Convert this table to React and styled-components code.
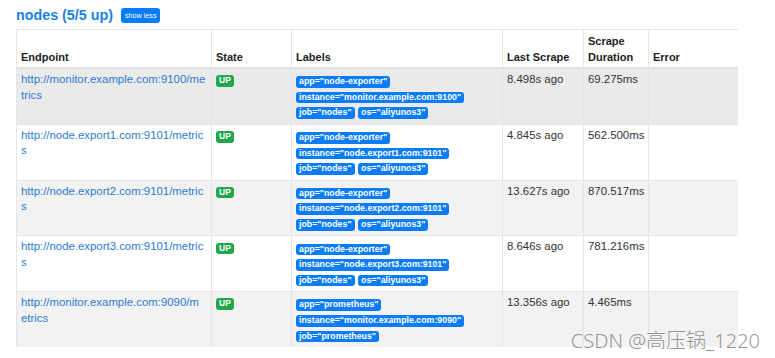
import React from "react";
import styled, { createGlobalStyle } from "styled-components";

const GlobalStyle = createGlobalStyle`
  html, body { margin: 0; padding: 0; background: #fff; }
  body { font-family: "Liberation Sans", Arial, sans-serif; color: #212529; }
`;

const Page = styled.div`
  position: relative;
  width: 775px;
  height: 358px;
  overflow: hidden;
  padding: 5px 0 0 16px;
  box-sizing: border-box;
`;

const TitleRow = styled.div`
  display: flex;
  align-items: center;
  gap: 8px;
  height: 20px;
`;

const Title = styled.h2`
  margin: 0;
  font-size: 14.3px;
  line-height: 20px;
  font-weight: 700;
  color: #1a7fe6;
`;

const SmallButton = styled.button`
  height: 15px;
  padding: 0 4px;
  border: none;
  border-radius: 3px;
  background: #0a7cf5;
  color: #fff;
  font-family: "Liberation Sans", Arial, sans-serif;
  font-size: 7.2px;
  line-height: 15px;
  cursor: pointer;
`;

const Table = styled.table`
  margin-top: 4px;
  width: 721px;
  table-layout: fixed;
  border-collapse: collapse;
  font-size: 11.4px;
`;

const Th = styled.th`
  text-align: left;
  vertical-align: bottom;
  font-size: 11px;
  line-height: 16px;
  font-weight: 700;
  padding: 3px 4px 2px 4px;
  border-top: 1px solid #e3e5e8;
  border-left: 1px solid #e3e5e8;
  border-bottom: 2px solid #e0e3e6;
  color: #222;
`;

const Tr = styled.tr`
  background: ${(p) => p.$bg};
`;

const Td = styled.td`
  vertical-align: top;
  padding: 3px 4px 3px 4px;
  line-height: 15.5px;
  border-left: 1px solid #e3e5e8;
  border-top: 1px solid #e3e5e8;
  color: #333;
`;

const EndpointLink = styled.a`
  color: #2a7bd3;
  text-decoration: none;
  white-space: nowrap;
`;

const Badge = styled.span`
  display: inline-block;
  height: 11.5px;
  line-height: 11.5px;
  padding: 0 3px;
  margin-right: 3.5px;
  border-radius: 3px;
  font-size: 8.8px;
  font-weight: 700;
  color: #fff;
  background: ${(p) => (p.$variant === "success" ? "#1fa84a" : "#0a7cf5")};
  vertical-align: middle;
  white-space: nowrap;
`;

const StateBadge = styled(Badge)`
  margin-top: 2px;
  padding: 0 3px;
  font-size: 8.5px;
`;

const Labels = styled.div`
  margin-top: 2px;
  line-height: 15.6px;
  height: 46.8px;
`;

const Watermark = styled.div`
  position: absolute;
  right: 15px;
  bottom: 4px;
  font-family: "Noto Sans", "Noto Sans CJK SC", sans-serif;
  font-size: 20px;
  font-weight: 300;
  color: rgba(110, 110, 110, 0.72);
`;

const rows = [
  {
    url: ["http://monitor.example.com:9100/me", "trics"],
    labels: ['app="node-exporter"', 'instance="monitor.example.com:9100"', 'job="nodes"', 'os="aliyunos3"'],
    last: "8.498s ago",
    dur: "69.275ms",
    bg: "#eaeaea",
  },
  {
    url: ["http://node.export1.com:9101/metric", "s"],
    labels: ['app="node-exporter"', 'instance="node.export1.com:9101"', 'job="nodes"', 'os="aliyunos3"'],
    last: "4.845s ago",
    dur: "562.500ms",
    bg: "#ffffff",
  },
  {
    url: ["http://node.export2.com:9101/metric", "s"],
    labels: ['app="node-exporter"', 'instance="node.export2.com:9101"', 'job="nodes"', 'os="aliyunos3"'],
    last: "13.627s ago",
    dur: "870.517ms",
    bg: "#f2f2f2",
  },
  {
    url: ["http://node.export3.com:9101/metric", "s"],
    labels: ['app="node-exporter"', 'instance="node.export3.com:9101"', 'job="nodes"', 'os="aliyunos3"'],
    last: "8.646s ago",
    dur: "781.216ms",
    bg: "#ffffff",
  },
  {
    url: ["http://monitor.example.com:9090/m", "etrics"],
    labels: ['app="prometheus"', 'instance="monitor.example.com:9090"', 'job="prometheus"'],
    last: "13.356s ago",
    dur: "4.465ms",
    bg: "#f2f2f2",
  },
];

export default function App() {
  return (
    <Page>
      <GlobalStyle />
      <TitleRow>
        <Title>nodes (5/5 up)</Title>
        <SmallButton>show less</SmallButton>
      </TitleRow>
      <Table>
        <colgroup>
          <col style={{ width: 195 }} />
          <col style={{ width: 80 }} />
          <col style={{ width: 211 }} />
          <col style={{ width: 81 }} />
          <col style={{ width: 65 }} />
          <col style={{ width: 89 }} />
        </colgroup>
        <thead>
          <tr>
            <Th>Endpoint</Th>
            <Th>State</Th>
            <Th>Labels</Th>
            <Th>Last Scrape</Th>
            <Th>Scrape Duration</Th>
            <Th>Error</Th>
          </tr>
        </thead>
        <tbody>
          {rows.map((r) => (
            <Tr key={r.url[0]} $bg={r.bg}>
              <Td>
                <EndpointLink href="#">
                  {r.url[0]}
                  <br />
                  {r.url[1]}
                </EndpointLink>
              </Td>
              <Td>
                <StateBadge $variant="success">UP</StateBadge>
              </Td>
              <Td>
                <Labels>
                  {r.labels.map((l) => (
                    <Badge key={l}>{l}</Badge>
                  ))}
                </Labels>
              </Td>
              <Td>{r.last}</Td>
              <Td>{r.dur}</Td>
              <Td></Td>
            </Tr>
          ))}
        </tbody>
      </Table>
      <Watermark>CSDN @高压锅_1220</Watermark>
    </Page>
  );
}
